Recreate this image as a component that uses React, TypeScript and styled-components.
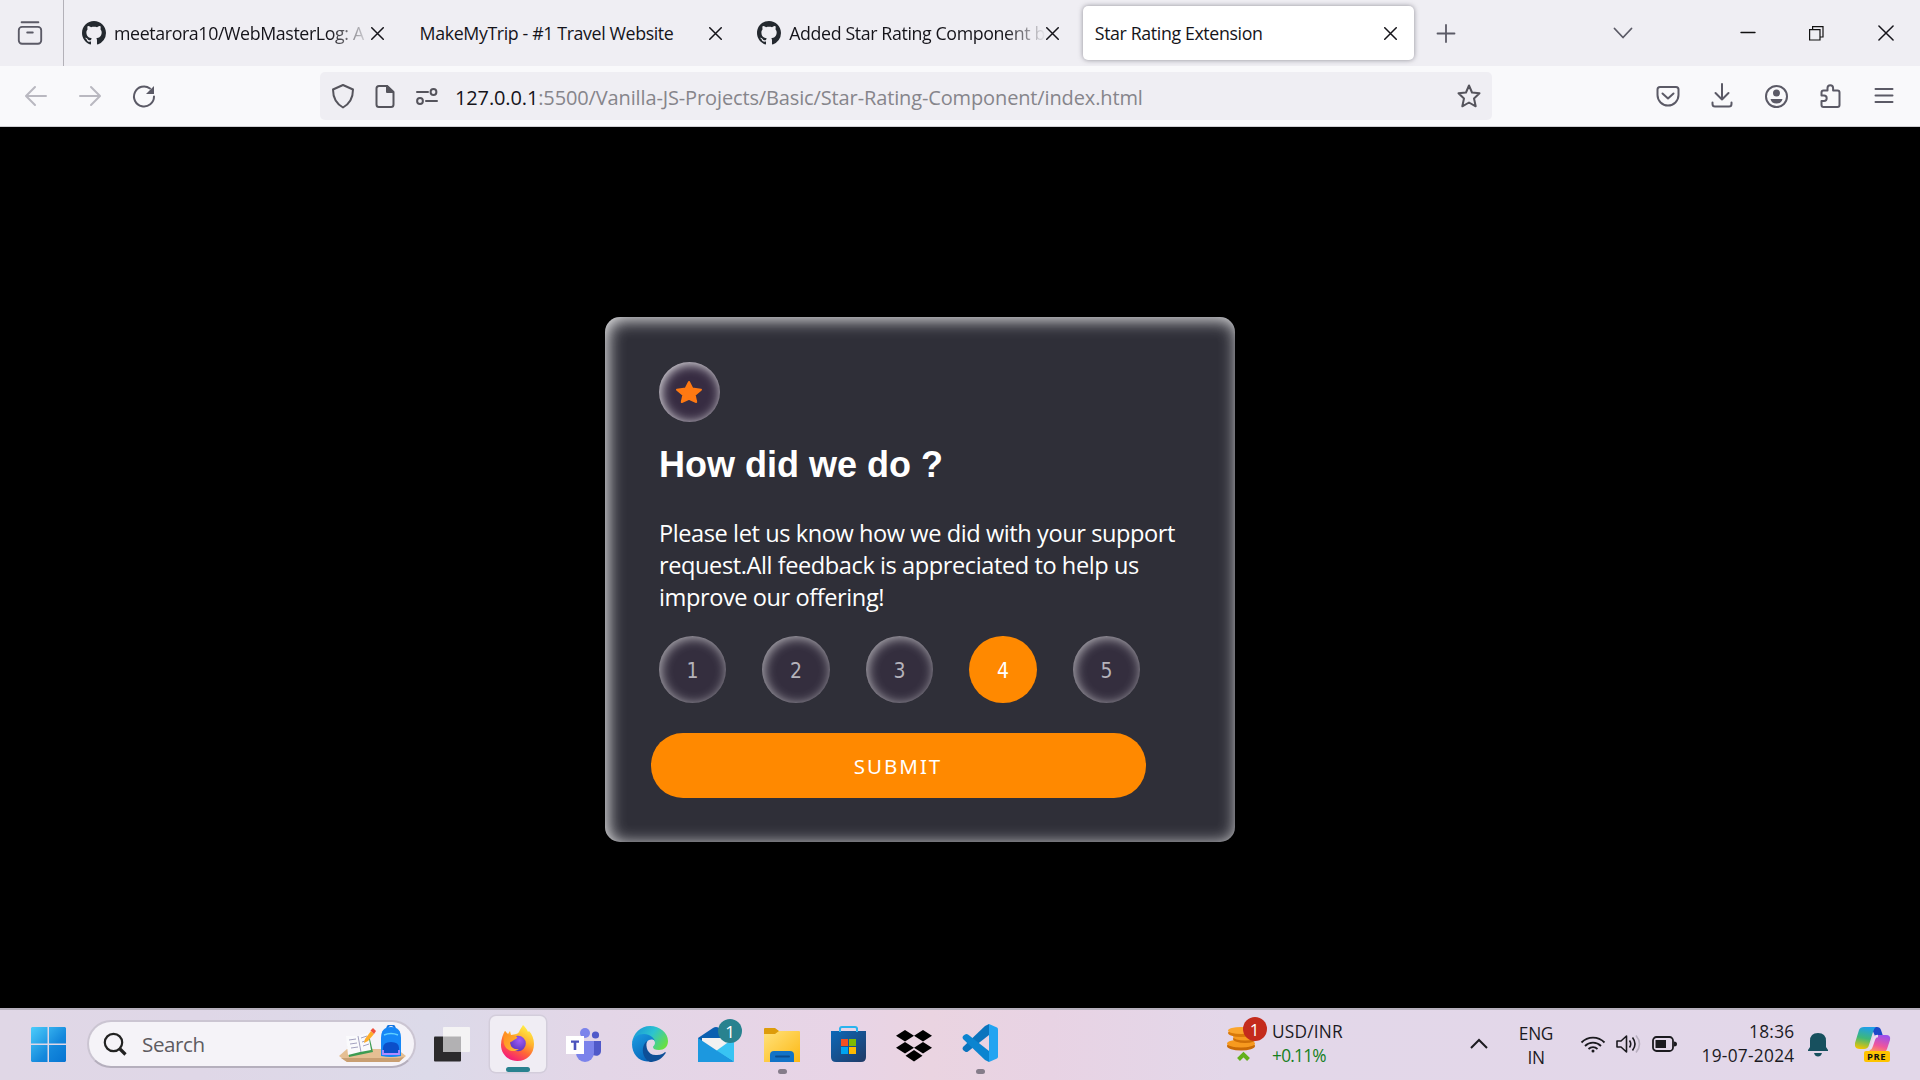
import React from "react";
import styled, { createGlobalStyle } from "styled-components";

const GlobalStyle = createGlobalStyle`
  * { box-sizing: border-box; }
  body { margin: 0; background: #000; overflow: hidden; }
`;

const Screen = styled.div`
  width: 1920px;
  height: 1080px;
  display: flex;
  flex-direction: column;
  background: #000;
  font-family: "Open Sans", "Noto Sans", sans-serif;
  white-space: nowrap;
`;

/* ---------- browser chrome ---------- */

const TabStrip = styled.div`
  height: 66px;
  flex: none;
  display: flex;
  align-items: center;
  background: #efeef3;
  color: #15141a;
`;

const SidebarSlot = styled.div`
  width: 64px;
  height: 66px;
  display: flex;
  align-items: center;
  padding-left: 16px;
  border-right: 1px solid #b3b1b8;
  margin-right: 6px;
`;

const Tab = styled.div<{ $active?: boolean }>`
  width: 331px;
  height: 54px;
  margin-right: 6.6px;
  padding: 0 17px 0 12px;
  display: flex;
  align-items: center;
  border-radius: 5px;
  background: ${(p) => (p.$active ? "#fff" : "transparent")};
  box-shadow: ${(p) => (p.$active ? "0 0 5px rgba(80,78,90,.6)" : "none")};
  svg { flex: none; }
`;

const TabLabel = styled.span<{ $fade?: boolean }>`
  flex: 1;
  min-width: 0;
  font-size: 17.8px;
  line-height: 26px;
  letter-spacing: -0.38px;
  ${(p) => p.$fade && "mask-image: linear-gradient(90deg, #000 84%, transparent 100%);"}
`;

const TabIcon = styled.span`
  display: flex;
  margin-right: 8px;
`;

const NewTab = styled.div`
  width: 50px;
  display: flex;
  justify-content: center;
  margin-left: 1px;
`;

const WindowControls = styled.div`
  margin-left: auto;
  display: flex;
  align-items: center;
`;

const ControlSlot = styled.div<{ $gap?: number }>`
  width: 69px;
  margin-right: ${(p) => p.$gap ?? 0}px;
  display: flex;
  justify-content: center;
`;

const Toolbar = styled.div`
  height: 61px;
  flex: none;
  display: flex;
  align-items: center;
  padding: 0 21px 0 21px;
  background: #f9f9fb;
  border-bottom: 1px solid #cfcfd3;
`;

const NavButtons = styled.div`
  width: 299px;
  display: flex;
  gap: 24px;
`;

const UrlBar = styled.div`
  width: 1172px;
  height: 48px;
  display: flex;
  align-items: center;
  padding: 0 8px;
  background: #efeef3;
  border-radius: 5px;
`;

const UrlIcons = styled.div`
  display: flex;
  gap: 12px;
  width: 127px;
`;

const Url = styled.span`
  flex: 1;
  font-size: 20px;
  line-height: 30px;
  letter-spacing: -0.13px;
  color: #86858b;
  padding-top: 3px;
  b { font-weight: 400; color: #15141a; }
`;

const ToolIcons = styled.div`
  margin-left: auto;
  display: flex;
  gap: 24px;
`;

/* ---------- page ---------- */

const Page = styled.main`
  flex: 1;
  min-height: 0;
  padding: 190px 0 0 605px;
  background: #000;
`;

const Card = styled.section`
  width: 630px;
  height: 525px;
  padding: 45px 54px;
  border-radius: 15px;
  background: #2f2f38;
  box-shadow: inset 2.5px 2.5px 17px rgba(255, 255, 255, 0.92);
  color: #fff;
`;

const StarBadge = styled.div`
  width: 61px;
  height: 60px;
  display: flex;
  align-items: center;
  justify-content: center;
  padding: 0 1px 1px 0;
  border-radius: 50%;
  background: #372c42;
  box-shadow: inset 1.5px 1.5px 12px rgba(255, 255, 255, 0.9);
`;

const Title = styled.h1`
  margin: 21px 0 0;
  font: 700 36px/44px "Liberation Sans", Arial, sans-serif;
`;

const Message = styled.p`
  margin: 30px 0 0;
  font-size: 23.6px;
  line-height: 32px;
  letter-spacing: -0.43px;
`;

const Ratings = styled.div`
  display: flex;
  gap: 36.3px;
  margin-top: 23px;
`;

const Rating = styled.button<{ $selected?: boolean }>`
  width: 67.2px;
  height: 67px;
  padding: 3px 0 0;
  border: 0;
  border-radius: 50%;
  font: 21px "DejaVu Sans Condensed", "DejaVu Sans", sans-serif;
  font-stretch: condensed;
  color: ${(p) => (p.$selected ? "#fff" : "#b5b3bb")};
  background: ${(p) => (p.$selected ? "#ff8900" : "#342e3e")};
  box-shadow: ${(p) => (p.$selected ? "none" : "inset 1.5px 1.5px 12px rgba(255,255,255,.65)")};
`;

const Submit = styled.button`
  display: block;
  width: 495px;
  height: 65px;
  margin: 30px 0 0 -8px;
  padding: 0 1px 0 0;
  border: 0;
  border-radius: 32px;
  background: #ff8900;
  color: #fff;
  font: 20.5px "Noto Sans", sans-serif;
  letter-spacing: 2px;
`;

/* ---------- taskbar ---------- */

const Taskbar = styled.footer`
  height: 72px;
  flex: none;
  display: flex;
  align-items: center;
  padding-bottom: 2px;
  border-top: 2px solid #b7b0bd;
  background: linear-gradient(90deg, #e0d7e6 0, #dfd7e7 200px, #dcdae9 430px, #e3d6e7 600px, #e8d4e6 850px, #ead4e1 930px, #e8d3e4 1050px, #e3d7e9 1230px, #e2d7e9 1920px);
  color: #1b1a1f;
`;

const StartSlot = styled.div`
  width: 87px;
  padding-left: 31px;
  display: flex;
`;

const SearchBox = styled.div`
  width: 329px;
  height: 48px;
  margin-right: 18px;
  display: flex;
  align-items: center;
  padding: 0 7px 0 14px;
  border: 2px solid #cbc5d2;
  border-bottom-color: #b5afbd;
  border-radius: 24px;
  background: #f5f3f8;
  font-size: 20.6px;
  letter-spacing: -0.4px;
  color: #5d5b60;
  span { flex: 1; margin-left: 15px; }
`;

const TaskView = styled.div`
  width: 51px;
  flex: none;
  display: flex;
`;

const AppSlot = styled.div`
  width: 66px;
  height: 70px;
  display: grid;
  grid-template-rows: 58px 7px;
  justify-items: center;
  align-items: end;
  flex: none;
  svg { margin-bottom: 5px; }
`;

const ActiveTile = styled.div`
  width: 56px;
  height: 56px;
  margin: 0 5px;
  flex: none;
  display: flex;
  flex-direction: column;
  align-items: center;
  justify-content: space-between;
  padding-top: 9px;
  border-radius: 6px;
  background: #f0edf4;
  box-shadow: 0 0 0 1.5px #d3cddb;
`;

const Indicator = styled.i<{ $active?: boolean }>`
  width: ${(p) => (p.$active ? 24 : 9)}px;
  height: 5px;
  border-radius: 3px;
  background: ${(p) => (p.$active ? "#28828f" : "#857c8a")};
`;

const BadgeHost = styled.div<{ $ml?: number }>`
  position: relative;
  display: flex;
  margin-left: ${(p) => p.$ml ?? 0}px;
`;

const Badge = styled.span<{ $color: string; $x: number; $y: number }>`
  position: absolute;
  left: ${(p) => p.$x}px;
  top: ${(p) => p.$y}px;
  width: 24px;
  height: 24px;
  border-radius: 50%;
  display: flex;
  align-items: center;
  justify-content: center;
  background: ${(p) => p.$color};
  color: #fff;
  font-size: 17px;
`;

const Tray = styled.div`
  margin-left: auto;
  width: 697px;
  height: 70px;
  display: flex;
  align-items: center;
`;

const Lines = styled.div<{ $w: number; $align: string; $ml?: number; $spacing?: number; $dy?: number }>`
  width: ${(p) => p.$w}px;
  margin-left: ${(p) => p.$ml ?? 0}px;
  margin-top: ${(p) => p.$dy ?? 0}px;
  text-align: ${(p) => p.$align};
  font-size: 17.3px;
  line-height: 24px;
  letter-spacing: ${(p) => p.$spacing ?? -0.3}px;
  flex: none;
`;

const Gain = styled.div`
  color: #15801d;
  letter-spacing: -0.75px;
`;

const TrayIcon = styled.div<{ $ml: number; $dy?: number }>`
  margin-left: ${(p) => p.$ml}px;
  margin-top: ${(p) => p.$dy ?? 0}px;
  display: flex;
  flex: none;
`;

/* ---------- icons ---------- */

type LineProps = { size?: number; color?: string; sw?: number; children: React.ReactNode };

const Line = ({ size = 30, color = "#5b5a66", sw = 2, children }: LineProps) => (
  <svg width={size} height={size} viewBox="0 0 30 30" fill="none" stroke={color} strokeWidth={sw} strokeLinecap="round" strokeLinejoin="round">
    {children}
  </svg>
);

const Close = ({ s = 13, sw = 1.5 }: { s?: number; sw?: number }) => (
  <svg width={s} height={s} viewBox="0 0 12 12" stroke="#15141a" strokeWidth={sw * 12 / s} strokeLinecap="round">
    <path d="M.7.7 11.3 11.3M11.3.7.7 11.3" />
  </svg>
);

const GitHub = () => (
  <svg width="24" height="24" viewBox="0 0 16 16" fill="#24292f">
    <path d="M8 0C3.58 0 0 3.58 0 8c0 3.54 2.29 6.53 5.47 7.59.4.07.55-.17.55-.38 0-.19-.01-.82-.01-1.49-2.01.37-2.53-.49-2.69-.94-.09-.23-.48-.94-.82-1.13-.28-.15-.68-.52-.01-.53.63-.01 1.08.58 1.23.82.72 1.21 1.87.87 2.33.66.07-.52.28-.87.51-1.07-1.78-.2-3.64-.89-3.64-3.95 0-.87.31-1.59.82-2.15-.08-.2-.36-1.02.08-2.12 0 0 .67-.21 2.2.82.64-.18 1.32-.27 2-.27s1.36.09 2 .27c1.53-1.04 2.2-.82 2.2-.82.44 1.1.16 1.92.08 2.12.51.56.82 1.27.82 2.15 0 3.07-1.87 3.75-3.65 3.95.29.25.54.73.54 1.48 0 1.07-.01 1.93-.01 2.2 0 .21.15.46.55.38A8.01 8.01 0 0 0 16 8c0-4.42-3.58-8-8-8z" />
  </svg>
);

const Firefox = () => (
  <svg width="36" height="37" viewBox="0 0 36 37">
    <defs>
      <linearGradient id="fx" x1=".8" y1=".05" x2=".3" y2="1">
        <stop offset="0" stopColor="#fff04a" /><stop offset=".35" stopColor="#ffb52e" /><stop offset=".62" stopColor="#ff6a35" /><stop offset="1" stopColor="#f5167d" />
      </linearGradient>
      <radialGradient id="fxg" cx=".6" cy=".3" r=".7">
        <stop offset="0" stopColor="#a05cf5" /><stop offset="1" stopColor="#5c35c0" />
      </radialGradient>
      <linearGradient id="fxt" x1="0" y1="0" x2="1" y2="1">
        <stop offset="0" stopColor="#ff8a1c" /><stop offset="1" stopColor="#ffbd36" />
      </linearGradient>
    </defs>
    <path d="M23 0c2 2 4 4 5 7l1-1c3 3 5 8 5 13 0 10-7 17-16.500 17S1 29 1 20C1 14 3 9 5 6l3 3 2-3 1 4c4-1 7-1 8-3 1-3 3-5 4-7z" fill="url(#fx)" />
    <circle cx="18" cy="18.500" r="7.800" fill="url(#fxg)" />
    <path d="M5 6c1 2 3 4 6 4 2 0 4 0 6 2 1 1-1 2-3 3-2 1-2 2-4 2 0 5 4 8 9 7-5 4-13 2-15-5C3 14 4 9 5 6z" fill="url(#fxt)" />
  </svg>
);

const Teams = () => (
  <svg width="36" height="34" viewBox="0 0 36 34">
    <circle cx="29.500" cy="7" r="3.600" fill="#5059c9" />
    <path d="M27 13h8v10c0 4-4 6-8 4z" fill="#5059c9" />
    <circle cx="19" cy="5" r="5" fill="#7b83eb" />
    <path d="M10 13h18v12a9 9 0 0 1-18 0z" fill="#7b83eb" />
    <rect x="0" y="8" width="18" height="18" fill="#fff" />
    <path d="M5 12.500h8v2.200h-2.700V22H7.700v-7.300H5z" fill="#4b53bc" />
  </svg>
);

const Edge = () => (
  <svg width="36" height="36" viewBox="0 0 36 36">
    <defs>
      <linearGradient id="eg" x1="0" y1=".2" x2="1" y2=".7"><stop offset="0" stopColor="#1996d8" /><stop offset=".5" stopColor="#2cc3d0" /><stop offset="1" stopColor="#6be03e" /></linearGradient>
      <linearGradient id="eb" x1="0" y1="0" x2=".6" y2="1"><stop offset="0" stopColor="#1b9de2" /><stop offset="1" stopColor="#0866ba" /></linearGradient>
    </defs>
    <path d="M0 17C1 7 9 0 18 0c10 0 18 7 18 15 0 6-4 9-9 9-4 0-6-1-6-3 0-1 2-2 2-4 0-3-3-5-7-5-7 0-13 3-16 5z" fill="url(#eg)" />
    <path d="M0 18C1 11 6 8 12 8c6 0 10 4 11 7-2-2-6-2-8 1-4 5 0 15 7 18-12 5-22-4-22-16z" fill="url(#eb)" />
    <path d="M15 15c-2 6 1 15 10 14 4 0 7-2 8-3 1 0 1 1 0 2-4 6-10 8-15 8-6-2-11-14-3-21z" fill="#0e4f97" />
  </svg>
);

const Mail = () => (
  <svg width="36" height="35" viewBox="0 0 36 35">
    <path d="M0 11 15 1q3-2 6 0l15 10v23H0z" fill="#0a5fb0" />
    <path d="M4 11h28v15H4z" fill="#f2f1f1" />
    <path d="M36 11v24L18 24z" fill="#38c4f3" />
    <path d="M0 11l36 24H0z" fill="#1c98df" />
  </svg>
);

const Explorer = () => (
  <svg width="36" height="34" viewBox="0 0 36 34">
    <defs><linearGradient id="fo" x1="0" y1="0" x2="1" y2="1"><stop offset="0" stopColor="#ffe27c" /><stop offset="1" stopColor="#fdb813" /></linearGradient></defs>
    <path d="M0 1q0-1 1-1h10l4 3h20v10H0z" fill="#dd9c0b" />
    <path d="M0 6h11l4-3h20q1 0 1 1v30H0z" fill="url(#fo)" />
    <path d="M6 34v-7q0-4 4-4h16q4 0 4 4v7z" fill="#1273c7" />
    <path d="M12 28.500h13" stroke="#0a4d8f" strokeWidth="2" strokeLinecap="round" />
  </svg>
);

const Store = () => (
  <svg width="35" height="36" viewBox="0 0 35 36">
    <defs><linearGradient id="st" x1="0" y1="0" x2="1" y2="1"><stop offset="0" stopColor="#0d68b8" /><stop offset="1" stopColor="#203a66" /></linearGradient></defs>
    <path d="M9 7V3q0-2 2-2h13q2 0 2 2v4" fill="none" stroke="#2bb4ee" strokeWidth="2" />
    <path d="M0 5h35v26q0 5-5 5H5q-5 0-5-5z" fill="url(#st)" />
    <path d="M9 6V2M26 6V2" stroke="#2bb4ee" strokeWidth="2" />
    <path d="M10 13h7v7h-7z" fill="#f25022" /><path d="M18 13h7v7h-7z" fill="#7fba00" />
    <path d="M10 21h7v7h-7z" fill="#00a4ef" /><path d="M18 21h7v7h-7z" fill="#ffb900" />
  </svg>
);

const Dropbox = () => (
  <svg width="36" height="32" viewBox="0 0 36 32" fill="#000">
    <path d="M9 0l9 5.800-9 5.700-9-5.700zM27 0l9 5.800-9 5.700-9-5.700zM9 12l9 5.800-9 5.700-9-5.700zM27 12l9 5.800-9 5.700-9-5.700zM18 20l8.500 5.800-8.500 5.700-8.500-5.700z" />
  </svg>
);

const VsCode = () => (
  <svg width="36" height="38" viewBox="0 0 36 38">
    <path d="M27 0l-4 2L1 23q-1 1.500 0 3l2 1.500q1.500 1 3 0L27 11z" fill="#0a74bd" />
    <path d="M27 38l-4-2L1 15q-1-1.500 0-3l2-1.500q1.500-1 3 0L27 27z" fill="#0b84d0" />
    <path d="M27 0l8 3.500q1 .5 1 2v27q0 1.500-1 2L27 38z" fill="#23a4f1" />
  </svg>
);

const Backpack = () => (
  <svg width="68" height="38" viewBox="0 0 68 38">
    <path d="M0 31l8-7h50l9 7-7 6H8z" fill="#e5bf93" />
    <path d="M2 33l58 0 5-1-5 5H8z" fill="#c99f72" />
    <path d="M8 14l22-4 4 17-24 5z" fill="#3d9c52" />
    <path d="M7 11l12 0 10-3 3 17-11 2-12 3z" fill="#fafafc" />
    <path d="M19 11l3 16M10 15l7-1M11 19l7-1M12 23l7-1M22 13l6-2M23 17l6-2M24 21l6-2" stroke="#a4a2c0" strokeWidth="1" />
    <path d="M26 14l6-8 3 3-6 7-4 2z" fill="#ffad28" /><path d="M31.500 5.500L34 3l3 3-2 3z" fill="#f0503e" />
    <path d="M48 5q0-5 4-5t4 5" fill="none" stroke="#1877e0" strokeWidth="2" />
    <path d="M42 31V13Q42 2 52 2t10 11v18q-10 2-20 0z" fill="#1687f7" />
    <path d="M44 29v-6q0-6 8-6t8 6v6z" fill="#0b4fc9" />
    <path d="M44 25v4h16v-4" stroke="#b18bff" strokeWidth="1.800" fill="none" />
    <path d="M45 10q7-3 14 0" stroke="#5fd0ff" strokeWidth="1.500" fill="none" />
  </svg>
);

const Coins = () => (
  <svg width="30" height="36" viewBox="0 0 30 36">
    <ellipse cx="14" cy="20" rx="14" ry="4.500" fill="#c96a06" />
    <ellipse cx="14" cy="17.500" rx="14" ry="4" fill="#f79a1f" />
    <ellipse cx="18" cy="13" rx="12" ry="4" fill="#cf7008" />
    <ellipse cx="18" cy="11" rx="12" ry="3.500" fill="#f79a1f" />
    <ellipse cx="14" cy="7" rx="13" ry="4" fill="#d97909" />
    <ellipse cx="14" cy="4.500" rx="13" ry="3.500" fill="#fba52c" />
    <path d="M11.500 33.500l5-5 5 5" fill="none" stroke="#62b01c" strokeWidth="4" />
  </svg>
);

const Copilot = () => (
  <svg width="36" height="36" viewBox="0 0 36 36">
    <defs>
      <linearGradient id="c1" x1=".5" y1="0" x2=".3" y2="1"><stop offset="0" stopColor="#1f9fe8" /><stop offset=".5" stopColor="#3fb878" /><stop offset="1" stopColor="#f3c500" /></linearGradient>
      <linearGradient id="c2" x1=".7" y1="0" x2=".3" y2="1"><stop offset="0" stopColor="#9b50ee" /><stop offset=".6" stopColor="#f0559c" /><stop offset="1" stopColor="#ff9b52" /></linearGradient>
    </defs>
    <path d="M16 1h6q3 0 4 3l2 6h-8z" fill="#1c49c8" />
    <path d="M20 9h11q5 0 4 5l-3 9q-1 3-4 3H11q4 0 5-4z" fill="url(#c2)" />
    <path d="M9 1h12q-2 1-3 5l-4 13q-1 4-5 4H5q-6 0-5-6L4 4q1-3 5-3z" fill="url(#c1)" />
    <path d="M15 23q1-1 2-4l2-6q1-3 4-3" fill="none" stroke="#eadff2" strokeWidth="2.500" />
  </svg>
);

const PreTag = styled.span`
  position: absolute;
  left: 9px;
  top: 25px;
  width: 26px;
  height: 11px;
  border-radius: 2px;
  background: #fdc400;
  color: #111;
  font: 700 9.5px/11px "Open Sans", sans-serif;
  letter-spacing: 0.5px;
  text-align: center;
`;

export default function App() {
  return (
    <Screen>
      <GlobalStyle />
      <TabStrip>
        <SidebarSlot>
          <Line size={28}>
            <rect x="3" y="8.500" width="24" height="18" rx="3.500" /><path d="M6 3.500h18M12 14.500h6" />
          </Line>
        </SidebarSlot>
        <Tab><TabIcon><GitHub /></TabIcon><TabLabel $fade>meetarora10/WebMasterLog: A</TabLabel><Close /></Tab>
        <Tab><TabLabel>MakeMyTrip - #1 Travel Website</TabLabel><Close /></Tab>
        <Tab><TabIcon><GitHub /></TabIcon><TabLabel $fade>Added Star Rating Component b</TabLabel><Close /></Tab>
        <Tab $active><TabLabel>Star Rating Extension</TabLabel><Close /></Tab>
        <NewTab><Line size={30} sw={1.8}><path d="M6.500 15.500h17M15 7v17" /></Line></NewTab>
        <WindowControls>
          <ControlSlot $gap={56}><Line size={30} sw={1.8}><path d="M6.500 10.500l8.500 9 8.500-9" /></Line></ControlSlot>
          <ControlSlot><Line color="#111" sw={1.4}><path d="M8 14.500h14" /></Line></ControlSlot>
          <ControlSlot>
            <svg width="15" height="15" viewBox="0 0 15 15" fill="none" stroke="#111" strokeWidth="1.200">
              <path d="M.6 3.600h10.400v10.400H.6zM3.600 3.600V.6h10.400v10.400H11" />
            </svg>
          </ControlSlot>
          <ControlSlot><Close s={16} sw={1.5} /></ControlSlot>
        </WindowControls>
      </TabStrip>

      <Toolbar>
        <NavButtons>
          <Line color="#b9b8c0"><path d="M25 15H5.500M14 6l-9 9 9 9" /></Line>
          <Line color="#b9b8c0"><path d="M5 15h19.500M16 6l9 9-9 9" /></Line>
          <Line><path d="M25 15.500A10 10 0 1 1 21 7.500" /><path d="M25 5v8h-8z" fill="#5b5a66" stroke="none" /></Line>
        </NavButtons>
        <UrlBar>
          <UrlIcons>
            <Line color="#55545c"><path d="M15 4l10 4.500c0 8-3 14-10 18-7-4-10-10-10-18z" /></Line>
            <Line color="#55545c"><path d="M9 5h8l6.500 6v12.500q0 2.500-2.500 2.500H9q-2.500 0-2.500-2.500v-16Q6.500 5 9 5z" /><path d="M17 5v6h6z" fill="#55545c" /></Line>
            <Line color="#55545c"><path d="M5 11h11M14 20h11" /><circle cx="21.500" cy="11" r="2.900" /><circle cx="8" cy="20" r="2.900" /></Line>
          </UrlIcons>
          <Url><b>127.0.0.1</b>:5500/Vanilla-JS-Projects/Basic/Star-Rating-Component/index.html</Url>
          <Line color="#55545c"><path d="M15 4.500l3 7 7.500.8-5.500 5.200 1.700 7.800L15 21.500l-6.700 3.800L10 17.500 4.500 12.300l7.500-.8z" /></Line>
        </UrlBar>
        <ToolIcons>
          <Line><path d="M7 6h16q2.500 0 2.500 2.500V14a10.500 10.500 0 0 1-21 0V8.500Q4.500 6 7 6z" /><path d="M9.500 12.500l5.500 5 5.500-5" /></Line>
          <Line><path d="M15 3v15.500M8.500 12l6.500 6.500 6.500-6.500M5.500 21.500v1.500q0 2.500 2.500 2.500h14q2.500 0 2.500-2.500v-1.500" /></Line>
          <Line><circle cx="15.500" cy="15.500" r="10.500" /><circle cx="15.500" cy="12" r="3.500" fill="#5b5a66" stroke="none" /><path d="M9.500 18h12q-1 4.500-6 4.500t-6-4.500z" fill="#5b5a66" stroke="none" /></Line>
          <Line><path d="M8.500 9.500h4V7a2.800 2.800 0 0 1 5.600 0v2.500H22.500q2 0 2 2V24q0 2-2 2h-14q-2 0-2-2v-4H9a2.700 2.700 0 0 0 0-5.400H6.500v-3q0-2 2-2z" /></Line>
          <Line><path d="M6.500 8h17M6.500 14.500h17M6.500 21h17" /></Line>
        </ToolIcons>
      </Toolbar>

      <Page>
        <Card>
          <StarBadge>
            <svg width="28" height="26" viewBox="0 0 28 26" fill="#ff7912" stroke="#ff7912" strokeWidth="2" strokeLinejoin="round">
              <path d="M14 3l3.300 6.500 8.700 1.200-6.300 5.200 1.500 7.100L14 19.800 6.800 23l1.500-7.100L2 10.700l8.700-1.200z" />
            </svg>
          </StarBadge>
          <Title>How did we do ?</Title>
          <Message>
            Please let us know how we did with your support<br />
            request.All feedback is appreciated to help us<br />
            improve our offering!
          </Message>
          <Ratings>
            {[1, 2, 3, 4, 5].map((n) => <Rating key={n} $selected={n === 4}>{n}</Rating>)}
          </Ratings>
          <Submit>SUBMIT</Submit>
        </Card>
      </Page>

      <Taskbar>
        <StartSlot>
          <svg width="35" height="35" viewBox="0 0 35 35">
            <defs><linearGradient id="wn" gradientUnits="userSpaceOnUse" x1="0" y1="0" x2="35" y2="35"><stop offset="0" stopColor="#4ccdfb" /><stop offset=".6" stopColor="#1488dc" /><stop offset="1" stopColor="#0674d2" /></linearGradient></defs>
            <path d="M1 0h15.500v16.500H0V1zM18 0h16l1 1v15.500H18zM0 18h16.500v17H1l-1-1zM18 18h17v16l-1 1H18z" fill="url(#wn)" />
          </svg>
        </StartSlot>
        <SearchBox>
          <svg width="24" height="24" viewBox="0 0 24 24" fill="none" stroke="#222" strokeWidth="2.200"><circle cx="10.500" cy="10.500" r="8.700" /><path d="M17 17l5.500 5.500" strokeWidth="3.200" /></svg>
          <span>Search</span>
          <Backpack />
        </SearchBox>
        <TaskView>
          <svg width="36" height="35" viewBox="0 0 36 35">
            <rect x="0" y="9.500" width="27" height="25" rx="1" fill="#2b2a2c" /><rect x="9" y="0" width="27" height="25" rx="1" fill="#f4f3f4" /><path d="M9 9.500h18V25H9z" fill="#b2b1b3" />
          </svg>
        </TaskView>
        <ActiveTile><Firefox /><Indicator $active /></ActiveTile>
        <AppSlot><Teams /></AppSlot>
        <AppSlot><Edge /></AppSlot>
        <AppSlot><BadgeHost><Mail /><Badge $color="#28828f" $x={20} $y={-8}>1</Badge></BadgeHost></AppSlot>
        <AppSlot><Explorer /><Indicator /></AppSlot>
        <AppSlot><Store /></AppSlot>
        <AppSlot><Dropbox /></AppSlot>
        <AppSlot><VsCode /><Indicator /></AppSlot>
        <Tray>
          <BadgeHost $ml={4}><Coins /><Badge $color="#c42b1c" $x={15.5} $y={-9}>1</Badge></BadgeHost>
          <Lines $w={90} $align="left" $ml={15} $spacing={0.2}>USD/INR<Gain>+0.11%</Gain></Lines>
          <TrayIcon $ml={108}>
            <svg width="18" height="12" viewBox="0 0 18 12" fill="none" stroke="#1b1a1f" strokeWidth="2"><path d="M1 10l8-8 8 8" /></svg>
          </TrayIcon>
          <Lines $w={60} $align="center" $ml={18} $dy={3}>ENG<br />IN</Lines>
          <TrayIcon $ml={14}>
            <svg width="26" height="20" viewBox="0 0 26 20" fill="none" stroke="#1b1a1f" strokeWidth="1.800">
              <path d="M1.500 8.500a16 16 0 0 1 23 0" /><path d="M5 12a11.300 11.300 0 0 1 16 0" /><path d="M8.500 15a6.500 6.500 0 0 1 9 0" /><circle cx="13" cy="17" r="1.500" fill="#1b1a1f" stroke="none" />
            </svg>
          </TrayIcon>
          <TrayIcon $ml={10}>
            <svg width="26" height="20" viewBox="0 0 26 20" fill="none" stroke="#1b1a1f" strokeWidth="1.600" strokeLinejoin="round">
              <path d="M1 7h4l5.500-5v16L5 13H1z" /><path d="M13.500 6.500q2.500 3.500 0 7M16.500 3.500q5 6.500 0 13" /><path d="M20 1.500q7 8.500 0 17" stroke="#b9b0c0" />
            </svg>
          </TrayIcon>
          <TrayIcon $ml={9.5}>
            <svg width="25" height="17" viewBox="0 0 25 17"><rect x="1" y="1" width="20" height="14" rx="3.500" fill="none" stroke="#1b1a1f" strokeWidth="1.800" /><rect x="3.500" y="4" width="10.500" height="8" fill="#1b1a1f" /><path d="M22 5.500q3 0 3 2.500t-3 2.500z" fill="#1b1a1f" /></svg>
          </TrayIcon>
          <Lines $w={110} $align="right" $ml={8} $spacing={0.28}>18:36<br />19-07-2024</Lines>
          <TrayIcon $ml={13} $dy={2}>
            <svg width="20" height="24" viewBox="0 0 20 24" fill="#17505e"><path d="M10 0q8 0 8 8v6l2 3v1H0v-1l2-3V8q0-8 8-8z" /><path d="M6 20h8q-1 3.500-4 3.500T6 20z" /></svg>
          </TrayIcon>
          <BadgeHost $ml={27}><Copilot /><PreTag>PRE</PreTag></BadgeHost>
        </Tray>
      </Taskbar>
    </Screen>
  );
}
